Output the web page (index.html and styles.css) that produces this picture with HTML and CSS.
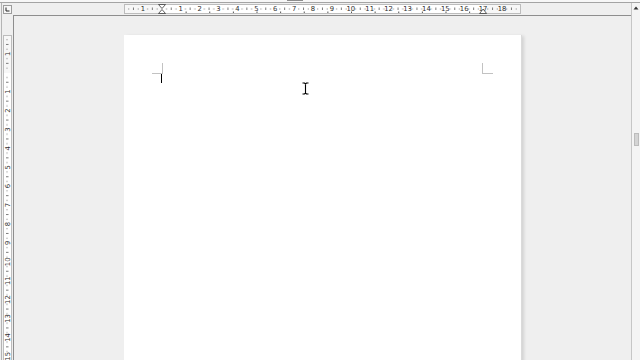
FILE: index.html
```html
<!DOCTYPE html>
<html>
<head>
<meta charset="utf-8">
<title>Writer</title>
<link rel="stylesheet" href="styles.css">
</head>
<body>
<div class="app">
  <div class="topstrip"><div class="topnub"></div></div>
  <div class="main">
    <div class="work">
      <div class="corner">
        <svg width="13" height="12" viewBox="0 0 13 12">
          <line x1="1.5" y1="0" x2="1.5" y2="12" stroke="#b4b4b4"/>
          <rect x="3.5" y="2.5" width="8" height="8" fill="#f6f6f6" stroke="#9c9c9c"/>
          <path d="M6 4.5 V8 H9.5" fill="none" stroke="#222" stroke-width="1"/>
        </svg>
      </div>
      <div class="hruler">
        <svg width="618" height="12" viewBox="0 0 618 12">
          <defs>
            <pattern id="hq" x="111" y="0" width="18.9" height="12" patternUnits="userSpaceOnUse">
              <rect x="4.2" y="5.5" width="1" height="1" fill="#7a7a7a"/>
              <rect x="8.95" y="4.5" width="1" height="2.5" fill="#7a7a7a"/>
              <rect x="13.7" y="5.5" width="1" height="1" fill="#7a7a7a"/>
            </pattern>
            <pattern id="ht" x="149" y="0" width="23.625" height="12" patternUnits="userSpaceOnUse">
              <rect x="0" y="8.5" width="1" height="1.5" fill="#555"/>
            </pattern>
          </defs>
          <rect x="111.5" y="1.5" width="396" height="9" fill="#f7f7f7" stroke="#bcbcbc"/>
          <rect x="149" y="2" width="321" height="8" fill="#ffffff"/>
          <rect x="112" y="2" width="395" height="8" fill="url(#hq)"/>
          <rect x="151" y="2" width="317" height="8" fill="url(#ht)"/>
          <g class="rnum" text-anchor="middle">
            <text x="129.9" y="8.3">1</text>
            <text x="167.7" y="8.3">1</text>
            <text x="186.6" y="8.3">2</text>
            <text x="205.5" y="8.3">3</text>
            <text x="224.4" y="8.3">4</text>
            <text x="243.3" y="8.3">5</text>
            <text x="262.2" y="8.3">6</text>
            <text x="281.1" y="8.3">7</text>
            <text x="300" y="8.3">8</text>
            <text x="318.9" y="8.3">9</text>
            <text x="337.8" y="8.3">10</text>
            <text x="356.7" y="8.3">11</text>
            <text x="375.6" y="8.3">12</text>
            <text x="394.5" y="8.3">13</text>
            <text x="413.4" y="8.3">14</text>
            <text x="432.3" y="8.3">15</text>
            <text x="451.2" y="8.3">16</text>
            <text x="470.1" y="8.3">17</text>
            <text x="489" y="8.3">18</text>
          </g>
          <path d="M145.5 1.5 h7 l-3.5 4 z M145.5 10.5 h7 l-3.5 -4 z" fill="#fff" stroke="#3a3a3a" stroke-width="0.8"/>
          <path d="M466.6 10.5 h7 l-3.5 -4.5 z" fill="#fff" stroke="#3a3a3a" stroke-width="0.8"/>
        </svg>
      </div>
      <div class="vruler">
        <svg width="13" height="345" viewBox="0 0 13 345">
          <defs>
            <pattern id="vq" x="0" y="20" width="13" height="18.9" patternUnits="userSpaceOnUse">
              <rect x="6.5" y="4.2" width="1" height="1" fill="#7a7a7a"/>
              <rect x="6" y="8.95" width="2.5" height="1" fill="#7a7a7a"/>
              <rect x="6.5" y="13.7" width="1" height="1" fill="#7a7a7a"/>
            </pattern>
          </defs>
          <line x1="1.5" y1="0" x2="1.5" y2="345" stroke="#b4b4b4"/>
          <rect x="3.5" y="20.5" width="8" height="400" fill="#f7f7f7" stroke="#bcbcbc"/>
          <rect x="4" y="58" width="7" height="300" fill="#ffffff"/>
          <rect x="4" y="21" width="7" height="324" fill="url(#vq)"/>
          <g class="rnum" text-anchor="middle">
            <text transform="translate(9.8 38.9) rotate(-90)">1</text>
            <text transform="translate(9.8 76.7) rotate(-90)">1</text>
            <text transform="translate(9.8 95.6) rotate(-90)">2</text>
            <text transform="translate(9.8 114.5) rotate(-90)">3</text>
            <text transform="translate(9.8 133.4) rotate(-90)">4</text>
            <text transform="translate(9.8 152.3) rotate(-90)">5</text>
            <text transform="translate(9.8 171.2) rotate(-90)">6</text>
            <text transform="translate(9.8 190.1) rotate(-90)">7</text>
            <text transform="translate(9.8 209) rotate(-90)">8</text>
            <text transform="translate(9.8 227.9) rotate(-90)">9</text>
            <text transform="translate(9.8 246.8) rotate(-90)">10</text>
            <text transform="translate(9.8 265.7) rotate(-90)">11</text>
            <text transform="translate(9.8 284.6) rotate(-90)">12</text>
            <text transform="translate(9.8 303.5) rotate(-90)">13</text>
            <text transform="translate(9.8 322.4) rotate(-90)">14</text>
            <text transform="translate(9.8 341.3) rotate(-90)">15</text>
          </g>
        </svg>
      </div>
      <div class="canvas">
        <div class="page">
          <div class="textarea">
            <span class="caret"></span>
          </div>
        </div>
      </div>
    </div>
    <div class="vscroll">
      <div class="sbtn">
        <svg width="8" height="6" viewBox="0 0 8 6"><path d="M1.5 4.5 L4 1.5 L6.5 4.5 z" fill="#333"/></svg>
      </div>
      <div class="thumb"></div>
    </div>
  </div>
  <svg class="ibeam" width="9" height="13" viewBox="0 0 9 13">
    <path d="M1.5 1 H3.5 L4.5 2 L5.5 1 H7.5 M4.5 2 V11 M1.5 12 H3.5 L4.5 11 L5.5 12 H7.5" fill="none" stroke="#fff" stroke-width="2.6"/>
    <path d="M1.5 1 H3.5 L4.5 2 L5.5 1 H7.5 M4.5 2 V11 M1.5 12 H3.5 L4.5 11 L5.5 12 H7.5" fill="none" stroke="#000" stroke-width="1.1"/>
  </svg>
</div>
</body>
</html>
```

FILE: styles.css
```css
* {
  box-sizing: border-box;
}

html, body {
  margin: 0;
  padding: 0;
}

body {
  width: 640px;
  height: 360px;
  overflow: hidden;
  background: #efefef;
  font-family: "DejaVu Sans", "Liberation Sans", sans-serif;
}

.app {
  position: relative;
  width: 640px;
  height: 360px;
  display: flex;
  flex-direction: column;
  background: #efefef;
}

.topstrip {
  height: 3px;
  flex: none;
  background: #f7f7f7;
  border-bottom: 1px solid #a4a4a4;
  display: flex;
}

.topnub {
  margin-left: 287px;
  width: 16px;
  height: 1px;
  background: #8c8c8c;
}

.main {
  flex: 1;
  display: flex;
  min-height: 0;
}

.work {
  width: 631px;
  flex: none;
  display: grid;
  grid-template-columns: 13px 618px;
  grid-template-rows: 12px 1fr;
  min-height: 0;
}

.corner,
.hruler,
.vruler {
  background: #efefef;
  overflow: hidden;
}

.corner svg,
.hruler svg,
.vruler svg {
  display: block;
}

.rnum text {
  font-family: "DejaVu Sans", "Liberation Sans", sans-serif;
  font-size: 6.8px;
  fill: #2e2e2e;
}

.canvas {
  border-top: 1px solid #8e8e8e;
  border-left: 1px solid #8e8e8e;
  background: #efefef;
  padding: 19px 0 0 110px;
  overflow: hidden;
}

.page {
  width: 397px;
  height: 400px;
  background: #ffffff;
  box-shadow: 1px 0 0 #dadada, 3px 1px 3px rgba(0, 0, 0, 0.12);
  padding: 38px 38px;
}

.textarea {
  position: relative;
  height: 300px;
}

.textarea::before,
.textarea::after {
  content: "";
  position: absolute;
  top: -10px;
  width: 10px;
  height: 10px;
  border-bottom: 1px solid #c2c2c2;
}

.textarea::before {
  left: -10px;
  border-right: 1px solid #c2c2c2;
}

.textarea::after {
  right: -10px;
  border-left: 1px solid #c2c2c2;
}

.caret {
  display: block;
  width: 1px;
  height: 10px;
  background: #000;
  margin-left: -1px;
}

.vscroll {
  width: 9px;
  flex: none;
  background: #f4f4f4;
  border-left: 1px solid #c6c6c6;
  display: flex;
  flex-direction: column;
  align-items: center;
}

.sbtn {
  margin-top: 1px;
  height: 8px;
  display: flex;
  align-items: center;
}

.sbtn svg {
  display: block;
}

.thumb {
  margin-top: 121px;
  width: 5px;
  height: 13px;
  background: #d4d4d4;
  border: 1px solid #bcbcbc;
}

.ibeam {
  position: absolute;
  left: 301px;
  top: 82px;
}
```
